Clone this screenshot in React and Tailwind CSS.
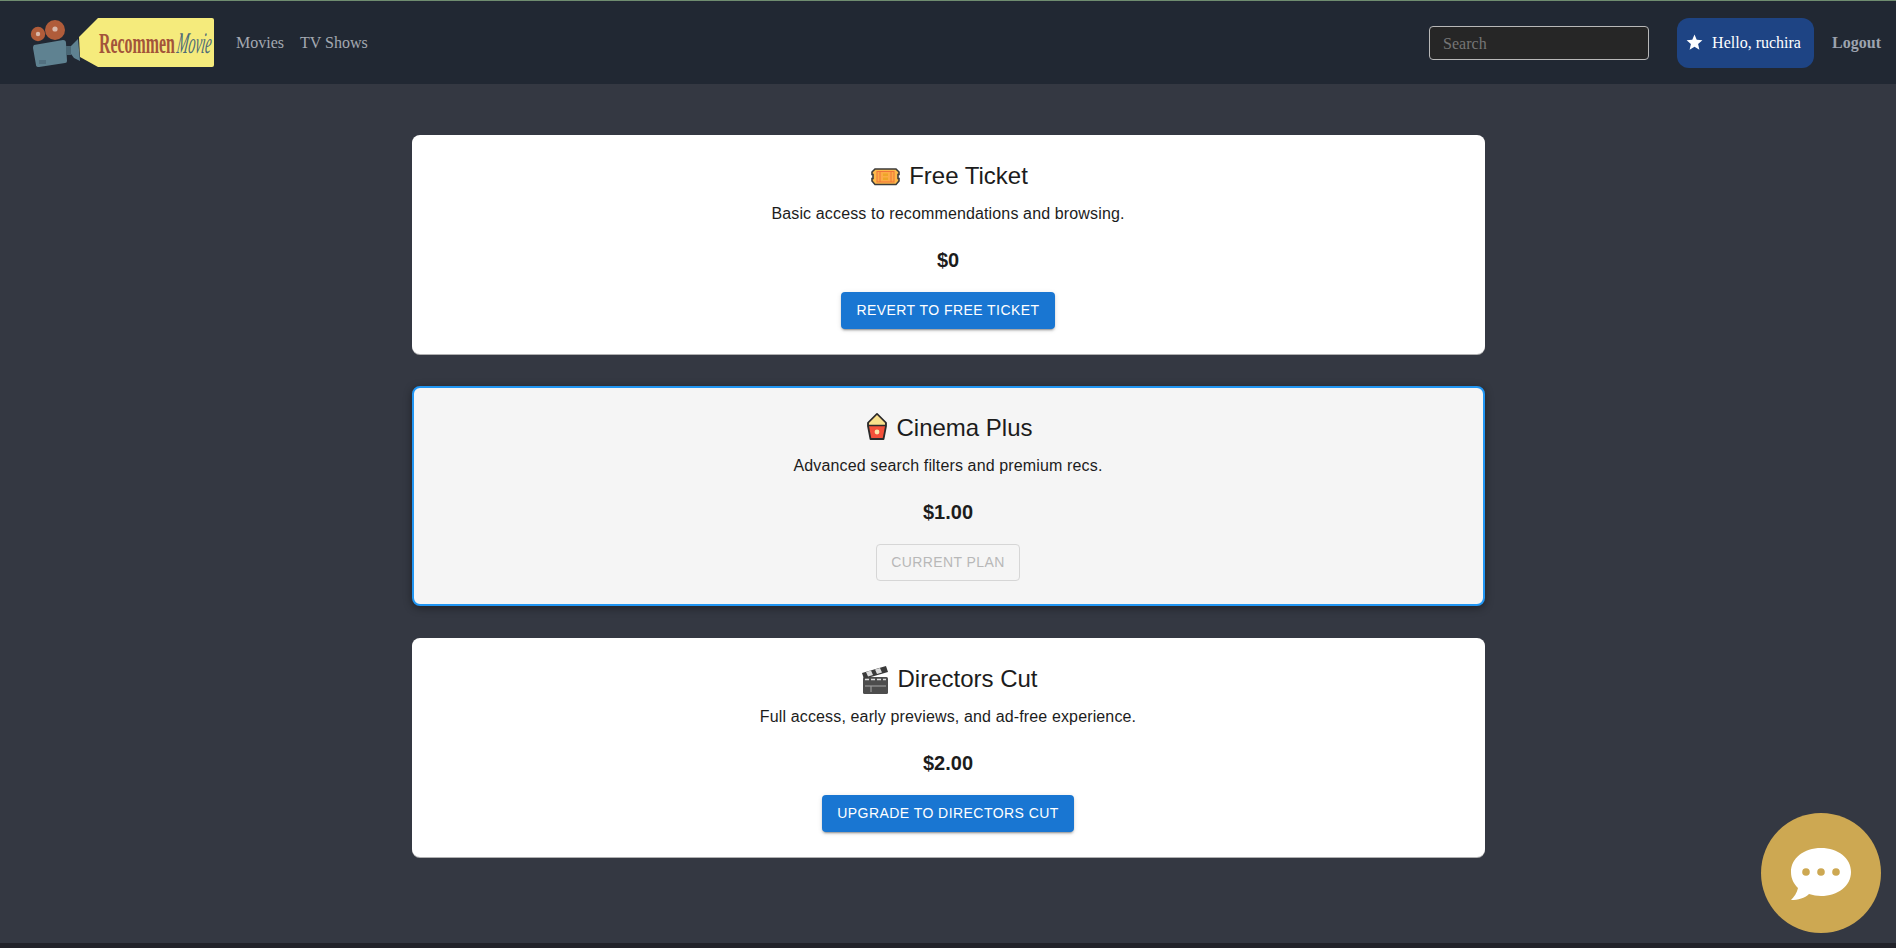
const Logo = () => (
  <svg width="190" height="52" viewBox="0 0 190 52" className="shrink-0">
    {/* tag */}
    <path d="M68 1H182Q184 1 184 3V48Q184 50 182 50H68L50 40L49 20Z" fill="#f5eb7c" />
    {/* film reels */}
    <circle cx="8" cy="17" r="7.2" fill="#b05c3a" />
    <circle cx="8" cy="17" r="2.2" fill="#d9b8aa" />
    <circle cx="25" cy="13" r="10" fill="#b05c3a" />
    <circle cx="25" cy="12" r="2.6" fill="#d9b8aa" />
    {/* camera body */}
    <path d="M4 28L33 23Q36 23 36 26L37 44Q37 46 35 46L9 50Q6 50 6 48L3 31Q3 29 4 28Z" fill="#5f8291" />
    <rect x="9" y="43" width="7" height="4" fill="#527080" />
    <path d="M36 29H41V38H36Z" fill="#496674" />
    <path d="M41 29L48 22L50 44L44 41L41 37Z" fill="#5f8291" />
    <text transform="translate(69 36) scale(0.53 1)" fontFamily="Liberation Serif" fontWeight="700" fontSize="30" fill="#a3543a">Recommen</text>
    <text transform="translate(146 36) skewX(-8) scale(0.46 1)" fontFamily="Liberation Serif" fontStyle="italic" fontSize="30" fill="#4d6a78">Movie</text>
  </svg>
);

const TicketIcon = () => (
  <svg width="34" height="32" viewBox="-1 0 34 32" className="shrink-0">
    <path d="M6 9H27L30 12V14.5H29V18.5H30V21L27 24.5H6L3 21V18.5H4V14.5H3V12Z" fill="#fdb94a" stroke="#3b3b3b" strokeWidth="1.6" />
    <rect x="8" y="11.5" width="17" height="10.5" fill="#fdab45" stroke="#f0743a" strokeWidth="1" />
    <rect x="14" y="13.5" width="5" height="2.5" fill="#eda528" />
    <rect x="14" y="17.5" width="5" height="2.5" fill="#eda528" />
    <path d="M11 11.5V22M22 11.5V22" stroke="#f0743a" strokeWidth="1" />
  </svg>
);

const PopcornIcon = () => (
  <svg width="26" height="32" viewBox="6 0 26 32" className="shrink-0">
    <path d="M20 2L29 11V14L26.5 27H13.5L11 14V11Z" fill="#f4503a" stroke="#2b2b2b" strokeWidth="1.8" strokeLinejoin="round" />
    <path d="M20 3L28 11V13H12V11Z" fill="#f7e08c" />
    <path d="M11 13.5H29" stroke="#2b2b2b" strokeWidth="1.5" />
    <circle cx="20" cy="20" r="2.4" fill="#fde6a8" />
  </svg>
);

const ClapperIcon = () => (
  <svg width="32" height="32" viewBox="0 0 32 32" className="shrink-0">
    <rect x="5" y="14" width="25" height="17" rx="1.5" fill="#4d4d4d" />
    <path d="M4 10L28 3L30 9L6 16Z" fill="#3a3a3a" />
    <path d="M8 9L13 7.5L15 12L10 13.5ZM17 6.5L22 5L24 9.5L19 11Z" fill="#dcdcdc" />
    <path d="M7 16.5L28 16.5" stroke="#dcdcdc" strokeWidth="1.4" strokeDasharray="4 2" />
    <path d="M7 23H28" stroke="#9a9a9a" strokeWidth="1.2" />
    <path d="M13 23V29" stroke="#9a9a9a" strokeWidth="1.2" />
  </svg>
);

const plans = [
  { name: 'Free Ticket', icon: <TicketIcon />, desc: 'Basic access to recommendations and browsing.', price: '$0', action: 'Revert to Free Ticket' },
  { name: 'Cinema Plus', icon: <PopcornIcon />, desc: 'Advanced search filters and premium recs.', price: '$1.00', current: true },
  { name: 'Directors Cut', icon: <ClapperIcon />, desc: 'Full access, early previews, and ad-free experience.', price: '$2.00', action: 'Upgrade to Directors Cut' },
];

const PlanCard = ({ plan }) => (
  <div
    className={
      plan.current
        ? 'w-[1073px] rounded-[8px] border-2 border-[#2196f3] bg-[#f5f5f5] pt-[24px] pb-[23px] px-[24px] flex flex-col items-center text-[#1c1c1c] shadow-[0_2px_8px_rgba(0,0,0,0.4)]'
        : 'w-[1073px] rounded-[8px] bg-white px-[24px] pt-[25px] pb-[25px] flex flex-col items-center text-[#1c1c1c] shadow-[0_1px_0_rgba(190,190,190,0.9)]'
    }
  >
    <h2 className="flex items-center gap-[7px] h-[32px] text-[24px] leading-[32px]">
      {plan.icon}
      {plan.name}
    </h2>
    <p className="mt-[10px] text-[16px] leading-[24px] tracking-[0.14px]">{plan.desc}</p>
    <p className="mt-[18px] mb-[16px] text-[20px] leading-[32px] font-bold">{plan.price}</p>
    {plan.current ? (
      <button className="h-[37px] px-[14.5px] rounded-[4px] border border-[#d6d6d6] text-[14px] tracking-[0.4px] uppercase text-[#b8b8b8]">
        Current Plan
      </button>
    ) : (
      <button className="h-[37px] px-[15.5px] rounded-[4px] bg-[#1976d2] text-[14px] tracking-[0.45px] uppercase text-white shadow-[0_3px_1px_-2px_rgba(0,0,0,0.2),0_2px_2px_0_rgba(0,0,0,0.14),0_1px_5px_0_rgba(0,0,0,0.12)]">
        {plan.action}
      </button>
    )}
  </div>
);

export default function App() {
  return (
    <div className="min-h-[948px] flex flex-col bg-[#343842] font-['Liberation_Sans',Arial,sans-serif]">
      <header className="h-[84px] shrink-0 flex items-center bg-[#212833] border-t border-[#6f8d70] pl-[30px] pr-[15px] font-['Liberation_Serif',serif] text-[16px]">
        <Logo />
        <nav className="flex items-center gap-[16px] ml-[16px] text-[#a4a9b1]">
          <a>Movies</a>
          <a>TV Shows</a>
        </nav>
        <input
          placeholder="Search"
          className="ml-auto w-[220px] h-[34px] rounded-[4px] border border-[#b8b8b8] bg-[#262626] px-[13px] pt-[2px] text-white placeholder:text-[#757575] outline-none"
        />
        <div className="ml-[28px] w-[137px] h-[50px] rounded-[12px] bg-[#1e4484] flex items-center pl-[8px] text-white">
          <svg width="19" height="19" viewBox="0 0 24 24" fill="currentColor" className="shrink-0">
            <path d="M12 17.27L18.18 21l-1.64-7.03L22 9.24l-7.19-.61L12 2 9.19 8.63 2 9.24l5.46 4.73L5.82 21z" />
          </svg>
          <span className="ml-[8px]">Hello, ruchira</span>
        </div>
        <a className="ml-[18px] font-bold text-[#9ca3af]">Logout</a>
      </header>

      <main className="flex-1 flex flex-col items-center gap-[32px] pt-[51px]">
        {plans.map((plan) => (
          <PlanCard key={plan.name} plan={plan} />
        ))}
      </main>

      <footer className="h-[5px] bg-[#212229]" />

      <button className="fixed right-[15px] bottom-[15px] w-[120px] h-[120px] rounded-full bg-[#cda852] flex items-center justify-center">
        <svg width="64" height="56" viewBox="0 0 64 56" className="mt-[2px]">
          <path d="M32 2C15 2 2 12 2 26C2 33 5 38 9 42C8 47 5 51 2 54C9 54 16 52 20 48C24 49 28 50 32 50C49 50 62 40 62 26C62 12 49 2 32 2Z" fill="#fff" />
          <circle cx="17" cy="26" r="3.8" fill="#cda852" />
          <circle cx="32" cy="26" r="3.8" fill="#cda852" />
          <circle cx="47" cy="26" r="3.8" fill="#cda852" />
        </svg>
      </button>
    </div>
  );
}
